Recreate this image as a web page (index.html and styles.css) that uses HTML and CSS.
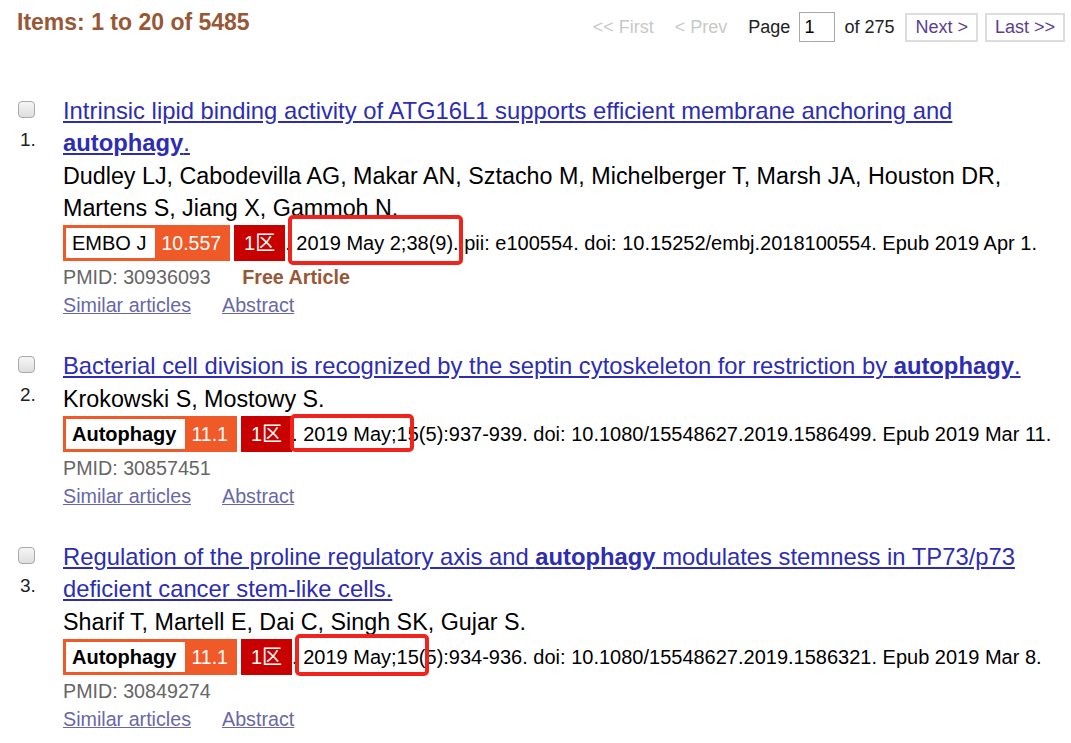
FILE: index.html
```html
<!DOCTYPE html>
<html lang="en">
<head>
    <meta charset="UTF-8">
    <title>autophagy - PubMed</title>
    <link rel="stylesheet" href="styles.css">
</head>
<body>
    <div class="top-bar">
        <h3 class="result-count">Items: 1 to 20 of 5485</h3>
        <div class="pager">
            <span class="pager-off">&lt;&lt; First</span>
            <span class="pager-off">&lt; Prev</span>
            <span class="pager-label">Page</span>
            <input class="pager-input" type="text" value="1">
            <span class="pager-label">of 275</span>
            <a href="#" class="pager-btn">Next &gt;</a>
            <a href="#" class="pager-btn">Last &gt;&gt;</a>
        </div>
    </div>

    <div class="results">
        <div class="rprt">
            <div class="rprt-side">
                <input type="checkbox" class="cb">
                <span class="num">1.</span>
            </div>
            <div class="rprt-body">
                <p class="title"><a href="#">Intrinsic lipid binding activity of ATG16L1 supports efficient membrane anchoring and <b>autophagy</b>.</a></p>
                <p class="authors">Dudley LJ, Cabodevilla AG, Makar AN, Sztacho M, Michelberger T, Marsh JA, Houston DR, Martens S, Jiang X, Gammoh N.</p>
                <p class="source"><span class="jbadge"><span class="jname">EMBO J</span><span class="jif">10.557</span></span><span class="zone">1区</span>. <span class="hl hl-1">2019 May 2;38(9).</span> pii: e100554. doi: 10.15252/embj.2018100554. Epub 2019 Apr 1.</p>
                <p class="meta">PMID: 30936093 <span class="free">Free Article</span></p>
                <p class="links"><a href="#">Similar articles</a><a href="#">Abstract</a></p>
            </div>
        </div>

        <div class="rprt">
            <div class="rprt-side">
                <input type="checkbox" class="cb">
                <span class="num">2.</span>
            </div>
            <div class="rprt-body">
                <p class="title"><a href="#">Bacterial cell division is recognized by the septin cytoskeleton for restriction by <b>autophagy</b>.</a></p>
                <p class="authors">Krokowski S, Mostowy S.</p>
                <p class="source"><span class="jbadge"><span class="jname bold">Autophagy</span><span class="jif">11.1</span></span><span class="zone">1区</span>. <span class="hl hl-2">2019 May;15</span>(5):937-939. doi: 10.1080/15548627.2019.1586499. Epub 2019 Mar 11.</p>
                <p class="meta">PMID: 30857451</p>
                <p class="links"><a href="#">Similar articles</a><a href="#">Abstract</a></p>
            </div>
        </div>

        <div class="rprt">
            <div class="rprt-side">
                <input type="checkbox" class="cb">
                <span class="num">3.</span>
            </div>
            <div class="rprt-body">
                <p class="title"><a href="#">Regulation of the proline regulatory axis and <b>autophagy</b> modulates stemness in TP73/p73 deficient cancer stem-like cells.</a></p>
                <p class="authors">Sharif T, Martell E, Dai C, Singh SK, Gujar S.</p>
                <p class="source"><span class="jbadge"><span class="jname bold">Autophagy</span><span class="jif">11.1</span></span><span class="zone">1区</span>. <span class="hl hl-3">2019 May;15(5</span>):934-936. doi: 10.1080/15548627.2019.1586321. Epub 2019 Mar 8.</p>
                <p class="meta">PMID: 30849274</p>
                <p class="links"><a href="#">Similar articles</a><a href="#">Abstract</a></p>
            </div>
        </div>
    </div>
</body>
</html>
```

FILE: styles.css
```css
body {
    margin: 0;
    background-color: #ffffff;
    color: #000000;
    font-family: "Liberation Sans", Arial, sans-serif;
}

.top-bar {
    display: flex;
    justify-content: space-between;
    align-items: flex-start;
    height: 95px;
    padding: 8px 6px 0 17px;
    box-sizing: border-box;
}

.result-count {
    margin: 0;
    font-size: 23px;
    line-height: 28px;
    font-weight: bold;
    color: #985735;
}

.pager {
    display: flex;
    align-items: center;
    margin-top: 4px;
    font-size: 18px;
}

.pager-off {
    color: #c8c8c8;
    margin-right: 21px;
}

.pager-label {
    color: #222222;
}

.pager-input {
    width: 36px;
    height: 30px;
    box-sizing: border-box;
    margin: 0 9px;
    padding: 0 4px;
    border: 1px solid #a8a8a8;
    font-family: inherit;
    font-size: 18px;
    color: #000000;
}

.pager-btn {
    margin-left: 7px;
    padding: 0 8px;
    height: 29px;
    line-height: 25px;
    box-sizing: border-box;
    border: 2px solid #dddddd;
    color: #5b3e8f;
    text-decoration: none;
}

.pager-label + .pager-btn {
    margin-left: 11px;
}

/* one result */
.rprt {
    display: grid;
    grid-template-columns: 63px 1fr;
    margin-bottom: 32px;
}

.rprt-side {
    display: flex;
    flex-direction: column;
    align-items: flex-start;
    padding-left: 18px;
}

.cb {
    appearance: none;
    -webkit-appearance: none;
    width: 17px;
    height: 17px;
    margin: 6px 0 0 0;
    border: 1px solid #a9a9a9;
    border-radius: 4px;
    background: linear-gradient(#f6f6f6, #dedede);
}

.num {
    margin: 12px 0 0 2px;
    font-size: 19px;
    line-height: 20px;
    color: #222222;
}

.rprt-body {
    padding-right: 8px;
}

.rprt-body p {
    margin: 0;
}

.title {
    font-size: 23.8px;
    line-height: 32px;
}

.title a {
    color: #2d2db3;
}

.authors {
    font-size: 23.3px;
    line-height: 32px;
    margin-top: 1px !important;
}

.source {
    display: flex;
    align-items: center;
    height: 38px;
    font-size: 20px;
    line-height: 24px;
    white-space: pre;
}

.jbadge {
    display: inline-flex;
    align-items: center;
    height: 36px;
    box-sizing: border-box;
    border: 3px solid #f05a28;
    background-color: #f05a28;
}

.jname {
    display: flex;
    align-items: center;
    height: 100%;
    padding: 0 9px 0 6px;
    background-color: #ffffff;
    font-size: 20px;
}

.jname.bold {
    font-weight: bold;
}

.jif {
    padding: 0 6px 0 6px;
    color: #ffffff;
    font-size: 19.5px;
}

.zone {
    display: inline-flex;
    align-items: center;
    height: 36px;
    margin-left: 4px;
    padding: 0 10px;
    background-color: #c90000;
    color: #ffffff;
    font-size: 20px;
    font-family: "Liberation Sans", "Noto Sans CJK SC", sans-serif;
}

/* red annotation frames drawn over the date */
.hl {
    position: relative;
}

.hl::after {
    content: "";
    position: absolute;
    border: 4px solid #f0231d;
    border-radius: 5px;
}

.hl-1::after {
    left: -8px;
    right: -4px;
    top: -16px;
    bottom: -10px;
}

.hl-2::after {
    left: -13px;
    right: 5px;
    top: -8px;
    bottom: -6px;
}

.hl-3::after {
    left: -8px;
    right: 8px;
    top: -11px;
    bottom: -7px;
}

.meta {
    font-size: 19.7px;
    line-height: 30px;
    color: #666666;
}

.free {
    margin-left: 26px;
    font-weight: bold;
    color: #985735;
}

.links {
    font-size: 19.7px;
    line-height: 26px;
}

.links a {
    color: #6868a8;
    margin-right: 31px;
}
```
